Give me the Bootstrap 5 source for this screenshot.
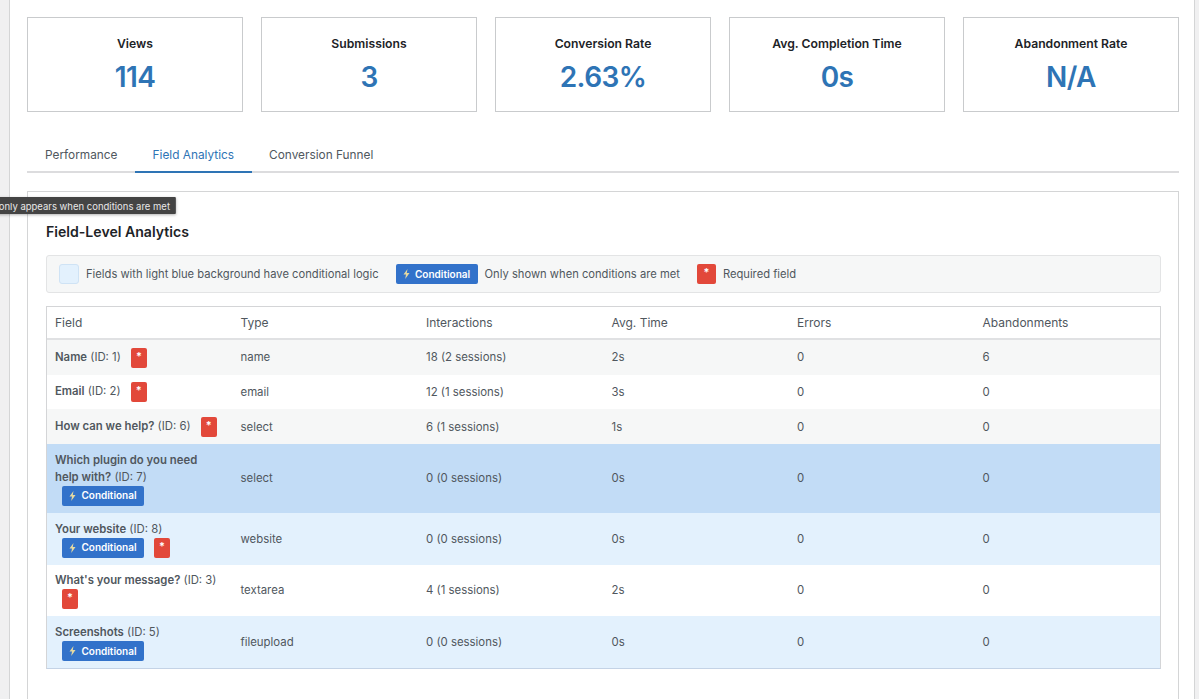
<!DOCTYPE html>
<html lang="en">
<head>
<meta charset="utf-8">
<title>Field Analytics</title>
<link href="https://cdn.jsdelivr.net/npm/bootstrap@5.3.0/dist/css/bootstrap.min.css" rel="stylesheet">
<style>
html,body{height:699px;overflow:hidden}
body{background:#f0f0f1;font-family:Inter,"Liberation Sans",sans-serif;color:#50575e;font-size:12px}
.sheet{margin-left:9px;width:1186px;height:699px;background:#fff;border-left:1px solid #d4d5d6;border-right:1px solid #d4d5d6;padding:17px 15px 0 17px}
.stats{display:grid;grid-template-columns:repeat(5,216px);gap:18px}
.stat{border:1px solid #c9cbcd;border-radius:0;height:95px;align-items:center;text-align:center;padding-top:18px;color:#1d2327}
.stat-label{font-size:12.2px;font-weight:600;line-height:16px}
.stat-value{font-size:28px;font-weight:600;letter-spacing:-.6px;line-height:36px;color:#2e74b5;margin-top:7px}
.tabbar{margin-top:26px;height:35px;border-bottom:2px solid #dcdcde;flex-wrap:nowrap}
.tabbar .nav-link{height:35px;padding:0 17.5px;line-height:34px;font-size:11.85px;color:#50575e;border-bottom:2px solid transparent}
.tabbar .nav-item:first-child .nav-link{padding-left:18px}
.tabbar .nav-link.active{color:#2e74b5;border-bottom-color:#2e74b5}
.panel-box{position:relative;margin-top:18px;height:508px;border:1px solid #d4d5d6;border-bottom:0;padding:26px 17px 0 18px}
.tip-box{position:absolute;left:148px;top:5px;transform:translateX(-100%);background:#444;color:#e8e8e8;font-size:9.5px;line-height:19px;height:17px;padding:0 6px;white-space:nowrap;border-radius:1px;box-shadow:0 1px 3px rgba(0,0,0,.3)}
.panel-title{font-size:14.1px;font-weight:600;line-height:28px;color:#1d2327;margin:0}
.legend-box{margin-top:9px;height:38px;background:#f6f7f7;border:1px solid #e3e4e5;border-radius:3px;padding:1px 12px 0;font-size:11.2px}
.swatch{width:20px;height:20px;background:#e3f1fd;border:1px solid #cfe3f5;border-radius:3px;margin-right:7px;margin-top:-1px}
.cond-tag,.req-tag{display:inline-flex;align-items:center;justify-content:center;color:#fff;font-weight:600;border-radius:2px;font-size:10px}
.cond-tag{background:#3272ca;width:82px;height:20px;gap:5px}
.req-tag{background:#e2483a;width:16px;height:20px;font-size:11px;line-height:1;padding-bottom:3px}
.legend-box .req-tag{width:19px}
.legend-box .cond-tag,.legend-box .req-tag{margin-left:17px;margin-right:7px;margin-top:-1px}
.bolt{width:7px;height:10px;fill:#e6d9a0}
.data-wrap{margin-top:13px;border:1px solid #d4d5d7;border-bottom-color:#c4d3e6}
.data-table{table-layout:fixed;width:100%;margin:0;font-size:11.4px;--bs-table-color:#50575e;--bs-table-border-color:transparent}
.data-table th{font-weight:400;font-size:12px;padding:0 8px;height:32px;vertical-align:middle;border-bottom:2px solid #e0e1e3}
.data-table td{padding:7.7px 8px 7px;vertical-align:middle;line-height:17px;border-width:0;font-size:11.4px}
.data-table td:first-child{font-size:11.35px;padding-right:14px}
.data-table tr>*{background:transparent}
.data-table tr.rs>*{background:#f6f7f7}
.data-table tr.rc>*{background:#e3f1fd}
.data-table tr.rh>*{background:#c2dcf6}
.fname{font-weight:600}
.tagline{display:flex;gap:10px;margin-left:7px}
.inline-tag{margin-left:7px;vertical-align:middle}
.h-s{height:34.8px}
</style>
</head>
<body>
<div class="sheet">
  <div class="stats">
    <div class="card stat"><div class="stat-label">Views</div><div class="stat-value">114</div></div>
    <div class="card stat"><div class="stat-label">Submissions</div><div class="stat-value">3</div></div>
    <div class="card stat"><div class="stat-label">Conversion Rate</div><div class="stat-value">2.63%</div></div>
    <div class="card stat"><div class="stat-label">Avg. Completion Time</div><div class="stat-value">0s</div></div>
    <div class="card stat"><div class="stat-label">Abandonment Rate</div><div class="stat-value">N/A</div></div>
  </div>
  <ul class="nav tabbar">
    <li class="nav-item"><a class="nav-link" href="#">Performance</a></li>
    <li class="nav-item"><a class="nav-link active" href="#">Field Analytics</a></li>
    <li class="nav-item"><a class="nav-link" href="#">Conversion Funnel</a></li>
  </ul>
  <div class="panel-box">
    <div class="tip-box">This field only appears when conditions are met</div>
    <h2 class="panel-title">Field-Level Analytics</h2>
    <div class="legend-box d-flex align-items-center">
      <span class="swatch"></span><span>Fields with light blue background have conditional logic</span>
      <span class="cond-tag"><svg class="bolt" viewBox="0 0 7 10"><path d="M4.5 0 0.5 5.6H3L2.2 10 6.5 4H3.8Z"/></svg>Conditional</span><span>Only shown when conditions are met</span>
      <span class="req-tag">*</span><span>Required field</span>
    </div>
    <div class="data-wrap">
      <table class="table data-table">
        <thead><tr><th>Field</th><th>Type</th><th>Interactions</th><th>Avg. Time</th><th>Errors</th><th>Abandonments</th></tr></thead>
        <tbody>
          <tr class="rs h-s"><td><span class="fname">Name</span> (ID: 1) <span class="req-tag inline-tag">*</span></td><td>name</td><td>18 (2 sessions)</td><td>2s</td><td>0</td><td>6</td></tr>
          <tr class="h-s"><td><span class="fname">Email</span> (ID: 2) <span class="req-tag inline-tag">*</span></td><td>email</td><td>12 (1 sessions)</td><td>3s</td><td>0</td><td>0</td></tr>
          <tr class="rs h-s"><td><span class="fname">How can we help?</span> (ID: 6) <span class="req-tag inline-tag">*</span></td><td>select</td><td>6 (1 sessions)</td><td>1s</td><td>0</td><td>0</td></tr>
          <tr class="rh"><td><span class="fname">Which plugin do you need help with?</span> (ID: 7)<div class="tagline"><span class="cond-tag"><svg class="bolt" viewBox="0 0 7 10"><path d="M4.5 0 0.5 5.6H3L2.2 10 6.5 4H3.8Z"/></svg>Conditional</span></div></td><td>select</td><td>0 (0 sessions)</td><td>0s</td><td>0</td><td>0</td></tr>
          <tr class="rc"><td><span class="fname">Your website</span> (ID: 8)<div class="tagline"><span class="cond-tag"><svg class="bolt" viewBox="0 0 7 10"><path d="M4.5 0 0.5 5.6H3L2.2 10 6.5 4H3.8Z"/></svg>Conditional</span><span class="req-tag">*</span></div></td><td>website</td><td>0 (0 sessions)</td><td>0s</td><td>0</td><td>0</td></tr>
          <tr><td><span class="fname">What's your message?</span> (ID: 3)<div class="tagline"><span class="req-tag">*</span></div></td><td>textarea</td><td>4 (1 sessions)</td><td>2s</td><td>0</td><td>0</td></tr>
          <tr class="rc"><td><span class="fname">Screenshots</span> (ID: 5)<div class="tagline"><span class="cond-tag"><svg class="bolt" viewBox="0 0 7 10"><path d="M4.5 0 0.5 5.6H3L2.2 10 6.5 4H3.8Z"/></svg>Conditional</span></div></td><td>fileupload</td><td>0 (0 sessions)</td><td>0s</td><td>0</td><td>0</td></tr>
        </tbody>
      </table>
    </div>
  </div>
</div>
<script src="https://cdn.jsdelivr.net/npm/bootstrap@5.3.0/dist/js/bootstrap.bundle.min.js"></script>
</body>
</html>
